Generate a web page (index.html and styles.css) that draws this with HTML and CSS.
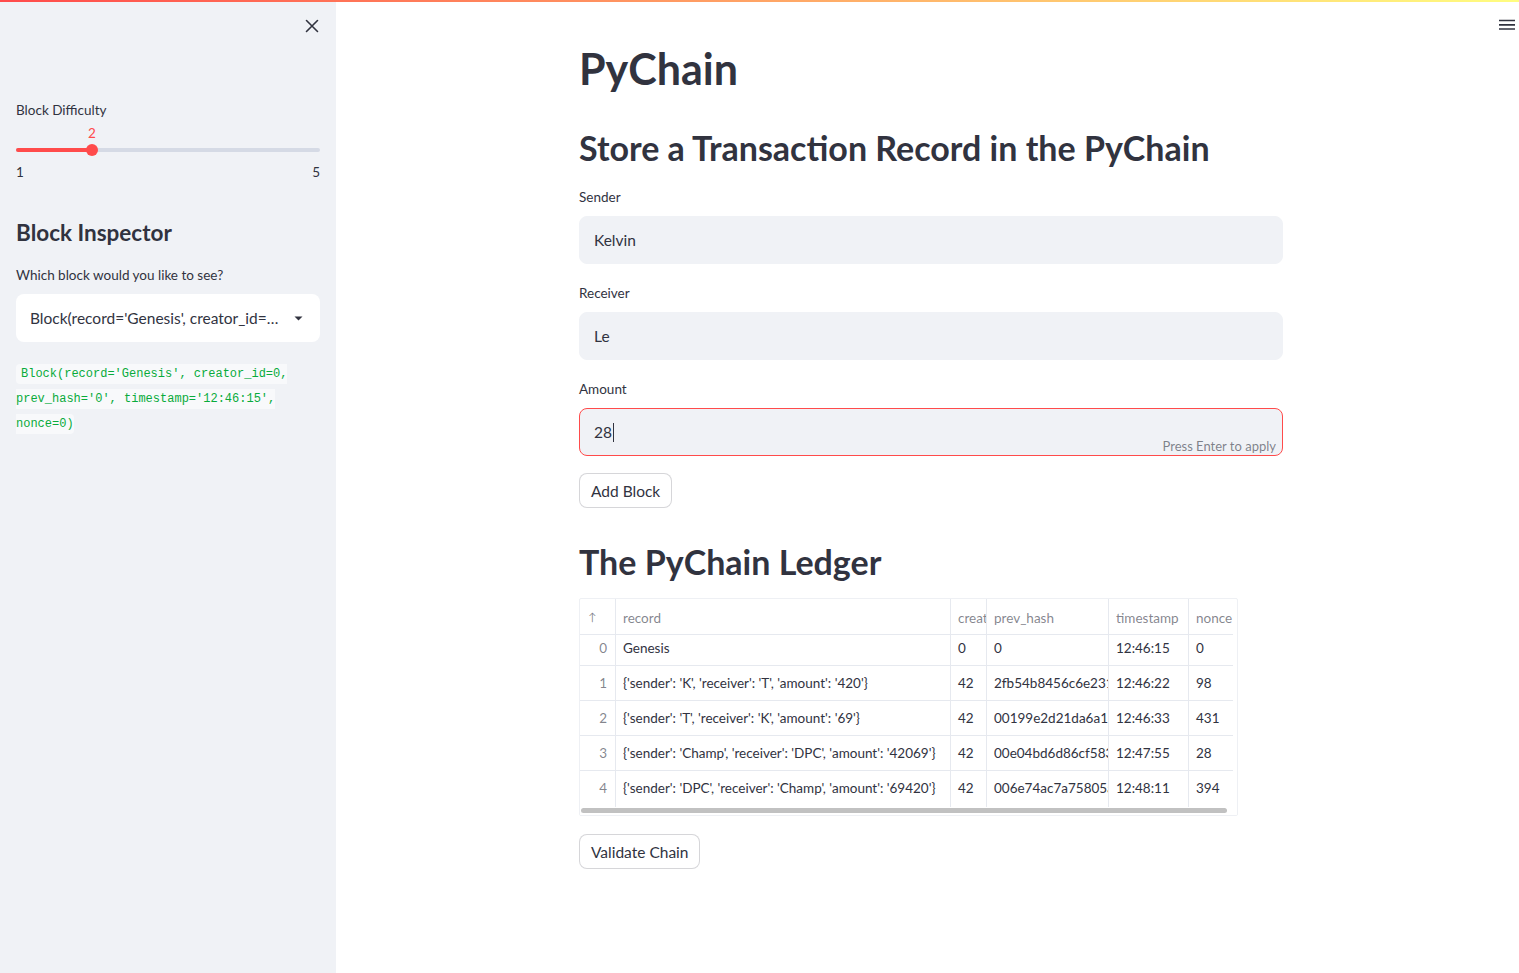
FILE: index.html
```html
<!DOCTYPE html>
<html>
<head>
<meta charset="utf-8">
<link rel="stylesheet" href="styles.css">
</head>
<body>
<div class="topbar"></div>
<div class="app">
  <aside class="sidebar">
    <div class="close-row">
      <svg class="close" width="14" height="14" viewBox="0 0 14 14"><path d="M1.5 1.5L12.5 12.5M12.5 1.5L1.5 12.5" stroke="#31333f" stroke-width="1.6" stroke-linecap="round"/></svg>
    </div>
    <div class="slider-block">
      <div class="lbl">Block Difficulty</div>
      <div class="slider">
        <div class="slider-value">2</div>
        <div class="track"><div class="fill"></div><div class="thumb"></div></div>
        <div class="ticks"><span>1</span><span>5</span></div>
      </div>
    </div>
    <h2 class="side-h2">Block Inspector</h2>
    <div class="lbl">Which block would you like to see?</div>
    <div class="select">
      <span class="select-text">Block(record='Genesis', creator_id=…</span>
      <svg width="9" height="5" viewBox="0 0 9 5"><path d="M0.5 0.5h8L4.5 4.5z" fill="#31333f"/></svg>
    </div>
    <p class="codep"><code>Block(record='Genesis', creator_id=0, prev_hash='0', timestamp='12:46:15', nonce=0)</code></p>
  </aside>
  <main class="main">
    <div class="content">
      <h1 class="h1">PyChain</h1>
      <h2 class="h2">Store a Transaction Record in the PyChain</h2>
      <div class="field">
        <div class="lbl">Sender</div>
        <div class="input">Kelvin</div>
      </div>
      <div class="field">
        <div class="lbl">Receiver</div>
        <div class="input">Le</div>
      </div>
      <div class="field">
        <div class="lbl">Amount</div>
        <div class="input active">28<span class="caret"></span><span class="hint">Press Enter to apply</span></div>
      </div>
      <div class="btn-row"><button class="btn">Add Block</button></div>
      <h2 class="h2 ledger">The PyChain Ledger</h2>
      <div class="table-wrap">
        <div class="table">
          <div class="row head">
            <div class="c idx">↑</div><div class="c rec">record</div><div class="c cr">creat</div><div class="c ph">prev_hash</div><div class="c ts">timestamp</div><div class="c nn">nonce</div>
          </div>
          <div class="row first">
            <div class="c idx">0</div><div class="c rec">Genesis</div><div class="c cr">0</div><div class="c ph">0</div><div class="c ts">12:46:15</div><div class="c nn">0</div>
          </div>
          <div class="row">
            <div class="c idx">1</div><div class="c rec">{'sender': 'K', 'receiver': 'T', 'amount': '420'}</div><div class="c cr">42</div><div class="c ph">2fb54b8456c6e2316</div><div class="c ts">12:46:22</div><div class="c nn">98</div>
          </div>
          <div class="row">
            <div class="c idx">2</div><div class="c rec">{'sender': 'T', 'receiver': 'K', 'amount': '69'}</div><div class="c cr">42</div><div class="c ph">00199e2d21da6a184</div><div class="c ts">12:46:33</div><div class="c nn">431</div>
          </div>
          <div class="row">
            <div class="c idx">3</div><div class="c rec">{'sender': 'Champ', 'receiver': 'DPC', 'amount': '42069'}</div><div class="c cr">42</div><div class="c ph">00e04bd6d86cf583c</div><div class="c ts">12:47:55</div><div class="c nn">28</div>
          </div>
          <div class="row">
            <div class="c idx">4</div><div class="c rec">{'sender': 'DPC', 'receiver': 'Champ', 'amount': '69420'}</div><div class="c cr">42</div><div class="c ph">006e74ac7a75805a7</div><div class="c ts">12:48:11</div><div class="c nn">394</div>
          </div>
        </div>
        <div class="scrollbar"><div class="scroll-thumb"></div></div>
      </div>
      <div class="btn-row validate"><button class="btn">Validate Chain</button></div>
    </div>
  </main>
  <svg class="hamburger" width="16" height="12" viewBox="0 0 16 12"><path d="M0 1.5h16M0 5.8h16M0 10h16" stroke="#31333f" stroke-width="1.7"/></svg>
</div>
</body>
</html>
```

FILE: styles.css
```css
* { box-sizing: border-box; }
html, body { margin: 0; padding: 0; }
body {
  font-family: Lato, "Noto Sans", sans-serif;
  color: #31333f;
  background: #fff;
  width: 1519px;
  height: 973px;
  overflow: hidden;
}
.topbar {
  position: absolute;
  top: 0; left: 0; right: 0;
  height: 2px;
  background: linear-gradient(90deg, #ff4b4b, #fffd80);
  z-index: 5;
}
.app { display: flex; height: 973px; }
.sidebar {
  width: 336px;
  flex: none;
  background: #f0f2f6;
  padding: 0 16px;
  display: flex;
  flex-direction: column;
}
.close-row { display: flex; justify-content: flex-end; padding-top: 19px; padding-right: 1px; height: 90px; }
.close { display: block; }
.lbl { font-size: 13.5px; line-height: 22px; height: 22px; }
.slider-block { margin-top: 9px; }
.slider { position: relative; height: 62px; }
.slider-value { color: #ff4b4b; font-size: 13.5px; line-height: 20px; position: absolute; left: 76px; width: 0; display: flex; justify-content: center; top: 2px; }
.track { position: absolute; top: 27px; left: 0; right: 0; height: 4px; border-radius: 2px; background: #d5dae5; }
.fill { width: 76px; height: 4px; border-radius: 2px; background: #ff4b4b; }
.thumb { position: absolute; left: 70px; top: -4px; width: 12px; height: 12px; border-radius: 50%; background: #ff4b4b; }
.ticks { position: absolute; top: 41px; left: 0; right: 0; display: flex; justify-content: space-between; font-size: 13.5px; line-height: 20px; }
.side-h2 { font-size: 22.5px; font-weight: 700; margin: 32px 0 0; line-height: 36px; height: 36px; }
.side-h2 + .lbl { margin-top: 13px; }
.select {
  margin-top: 8px;
  height: 48px;
  background: #fff;
  border-radius: 8px;
  display: flex;
  align-items: center;
  justify-content: space-between;
  padding: 0 17px 0 14px;
  font-size: 15.5px;
}
.codep {
  margin: 20px 0 0;
  font-family: "Liberation Mono", "DejaVu Sans Mono", monospace;
  font-size: 12px;
  line-height: 25px;
}
.codep code {
  font-family: inherit;
  line-height: 25px;
  color: #09ab3b;
  background: #f8f9fb;
  padding: 3px 0 3px 5px;
  border-radius: 4px;
  -webkit-box-decoration-break: slice;
  box-decoration-break: slice;
}
.main { flex: 1; position: relative; }
.content { width: 704px; margin-left: 243px; display: flex; flex-direction: column; }
.h1 { font-size: 43px; font-weight: 700; line-height: 53px; margin: 42px 0 0; }
.h2 { font-size: 34px; font-weight: 700; line-height: 43px; margin: 31px 0 0; }
.field { display: flex; flex-direction: column; gap: 8px; margin-top: 17px; }
.field + .field { margin-top: 18px; }
.input {
  position: relative;
  height: 48px;
  background: #f0f2f6;
  border-radius: 8px;
  border: 1px solid #f0f2f6;
  padding: 0 14px;
  display: flex;
  align-items: center;
  font-size: 15.5px;
}
.input.active { border-color: #ff4b4b; }
.caret { display: inline-block; width: 1px; height: 19px; background: #31333f; margin-left: 1px; }
.hint { position: absolute; right: 6px; bottom: 0; font-size: 13px; color: rgba(49, 51, 63, 0.6); line-height: 18px; }
.btn-row { margin-top: 17px; display: flex; }
.btn {
  font-family: inherit;
  font-size: 15.5px;
  color: #31333f;
  background: #fff;
  border: 1px solid rgba(49, 51, 63, 0.2);
  border-radius: 8px;
  height: 35px;
  padding: 0 11px;
}
.ledger { margin-top: 32px; }
.table-wrap {
  margin-top: 15px;
  width: 659px;
  border: 1px solid #eef0f4;
  border-radius: 2px;
  overflow: hidden;
  position: relative;
}
.table { width: 653px; overflow: hidden; }
.row { display: flex; height: 35px; border-bottom: 1px solid #e6e9ef; font-size: 13.5px; }
.row.head { height: 36px; color: rgba(49, 51, 63, 0.6); }
.row.head .c { padding-top: 2px; }
.row.first { height: 31px; }
.row.first .c { padding-bottom: 4px; }
.row:last-child { border-bottom: none; height: 36px; }
.row:last-child .c { padding-bottom: 3px; }
.c { flex: none; border-right: 1px solid #e6e9ef; padding: 0 7px; display: flex; align-items: center; white-space: nowrap; overflow: hidden; }
.c.idx { width: 36px; justify-content: flex-end; color: rgba(49, 51, 63, 0.6); padding-right: 8px; }
.head .c.idx { justify-content: flex-start; font-size: 11px; padding: 0 0 0 8px; }
.c.rec { width: 335px; }
.c.cr { width: 36px; }
.c.ph { width: 122px; padding-right: 0; }
.c.ts { width: 80px; }
.c.nn { width: 50px; border-right: none; }
.scrollbar { height: 8px; padding: 1px 10px 2px 1px; background: #fff; }
.scroll-thumb { height: 5px; background: #c1c1c1; border-radius: 3px; }
.validate { margin-top: 18px; }
.hamburger { position: absolute; top: 19px; right: 4px; }
```
